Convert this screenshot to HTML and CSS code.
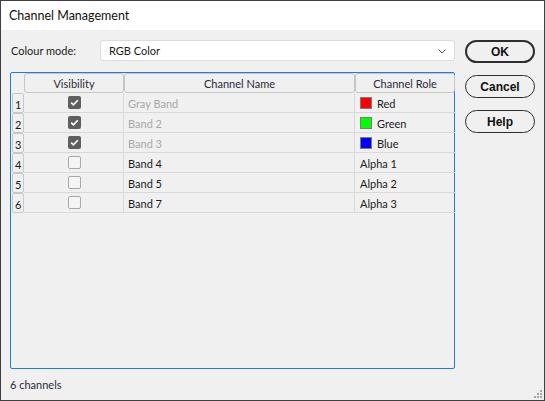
FILE: index.html
```html
<!DOCTYPE html>
<html>
<head>
<meta charset="utf-8">
<link rel="stylesheet" href="styles.css">
</head>
<body>
<div class="window">
  <div class="titlebar">Channel Management</div>
  <div class="content">
    <div class="main">
      <div class="mode-row">
        <span class="mode-label">Colour mode:</span>
        <div class="combo">
          <span>RGB Color</span>
          <svg class="chev" width="8" height="5" viewBox="0 0 8 5"><polyline points="0.5,0.5 4,4 7.5,0.5" fill="none" stroke="#555" stroke-width="1"/></svg>
        </div>
      </div>
      <div class="table">
        <div class="grid">
          <div class="corner"></div>
          <div class="hcell">Visibility</div>
          <div class="hcell">Channel Name</div>
          <div class="hcell">Channel Role</div>

          <div class="rn"><span>1</span></div>
          <div class="cell vis"><span class="cb checked"><svg width="13" height="13" viewBox="0 0 13 13"><polyline points="3.2,6.6 5.4,8.8 9.8,4.2" fill="none" stroke="#fff" stroke-width="1.6"/></svg></span></div>
          <div class="cell name dis">Gray Band</div>
          <div class="cell role"><span class="sw red"></span>Red</div>

          <div class="rn"><span>2</span></div>
          <div class="cell vis"><span class="cb checked"><svg width="13" height="13" viewBox="0 0 13 13"><polyline points="3.2,6.6 5.4,8.8 9.8,4.2" fill="none" stroke="#fff" stroke-width="1.6"/></svg></span></div>
          <div class="cell name dis">Band 2</div>
          <div class="cell role"><span class="sw green"></span>Green</div>

          <div class="rn"><span>3</span></div>
          <div class="cell vis"><span class="cb checked"><svg width="13" height="13" viewBox="0 0 13 13"><polyline points="3.2,6.6 5.4,8.8 9.8,4.2" fill="none" stroke="#fff" stroke-width="1.6"/></svg></span></div>
          <div class="cell name dis">Band 3</div>
          <div class="cell role"><span class="sw blue"></span>Blue</div>

          <div class="rn"><span>4</span></div>
          <div class="cell vis"><span class="cb"></span></div>
          <div class="cell name">Band 4</div>
          <div class="cell role">Alpha 1</div>

          <div class="rn"><span>5</span></div>
          <div class="cell vis"><span class="cb"></span></div>
          <div class="cell name">Band 5</div>
          <div class="cell role">Alpha 2</div>

          <div class="rn"><span>6</span></div>
          <div class="cell vis"><span class="cb"></span></div>
          <div class="cell name">Band 7</div>
          <div class="cell role">Alpha 3</div>
        </div>
      </div>
      <div class="footer">6 channels</div>
    </div>
    <div class="buttons">
      <div class="btn default">OK</div>
      <div class="btn">Cancel</div>
      <div class="btn">Help</div>
    </div>
  </div>
  <svg class="grip" width="9" height="9" viewBox="0 0 9 9">
    <rect x="7" y="1" width="2" height="2" fill="#a8a8a8"/>
    <rect x="4" y="4" width="2" height="2" fill="#a8a8a8"/>
    <rect x="7" y="4" width="2" height="2" fill="#a8a8a8"/>
    <rect x="1" y="7" width="2" height="2" fill="#a8a8a8"/>
    <rect x="4" y="7" width="2" height="2" fill="#a8a8a8"/>
    <rect x="7" y="7" width="2" height="2" fill="#a8a8a8"/>
  </svg>
</div>
</body>
</html>
```

FILE: styles.css
```css
* { box-sizing: border-box; }
html, body { margin: 0; padding: 0; }
body {
  font-family: "Lato", "Liberation Sans", sans-serif;
  font-size: 11px;
  color: #1b1b1b;
  background: #f0f0f0;
}
.window {
  position: relative;
  width: 545px;
  height: 401px;
  border: 1px solid #404040;
  display: flex;
  flex-direction: column;
  background: #f0f0f0;
}
.titlebar {
  height: 29px;
  line-height: 30px;
  background: #fff;
  padding-left: 8px;
  font-size: 12.5px;
  color: #111;
}
.content {
  flex: 1;
  display: flex;
  gap: 9px;
  padding: 0 9px;
}
.main {
  width: 446px;
  display: flex;
  flex-direction: column;
}
.mode-row {
  display: flex;
  align-items: center;
  margin-top: 10px;
  height: 21px;
}
.mode-label {
  width: 90px;
  padding-left: 1px;
}
.combo {
  flex: 1;
  height: 21px;
  margin-right: 1px;
  background: #fff;
  border: 1px solid #dcdcdc;
  border-radius: 3px;
  display: flex;
  align-items: center;
  justify-content: space-between;
  padding: 0 8px 0 8px;
}
.chev { margin-top: 1px; }
.table {
  margin-top: 11px;
  height: 297px;
  border: 1px solid #1a7fdc;
  border-radius: 2px;
  margin-right: 1px;
}
.grid {
  display: grid;
  grid-template-columns: 13px 100px 231px 100px;
  grid-auto-rows: 20px;
}
.hcell {
  border: 1px solid #c6c6c6;
  border-radius: 3px;
  display: flex;
  align-items: center;
  justify-content: center;
  color: #2a2a3a;
  padding-top: 1px;
}
.rn {
  padding-left: 1px;
}
.rn span {
  display: block;
  height: 20px;
  width: 12px;
  border: 1px solid #c8c8c8;
  border-radius: 2px;
  padding-left: 2px;
  padding-top: 4px;
  line-height: 14px;
  font-size: 11px;
}
.cell {
  border-bottom: 1px solid #d9d9d9;
  display: flex;
  align-items: center;
  padding-top: 1px;
}
.vis {
  border-right: 1px solid #d9d9d9;
  justify-content: center;
  padding-left: 1px;
  padding-top: 0;
}
.name {
  border-right: 1px solid #d9d9d9;
  padding-left: 4px;
}
.dis { color: #a8a8a8; }
.role { padding-left: 5px; }
.cb {
  width: 13px;
  height: 13px;
  border: 1px solid #a9a9a9;
  border-radius: 2px;
  background: #f5f5f5;
  display: block;
}
.cb.checked {
  border: none;
  background: #5f5f5f;
}
.cb svg { display: block; }
.sw {
  width: 12px;
  height: 12px;
  border: 1px solid #7c7c7c;
  margin-right: 5px;
  margin-top: -1px;
}
.red { background: #ff0000; }
.green { background: #00ff00; }
.blue { background: #0000ff; }
.footer {
  flex: 1;
  display: flex;
  align-items: center;
  color: #2a2a3a;
  padding-bottom: 1px;
}
.buttons {
  width: 70px;
  display: flex;
  flex-direction: column;
  gap: 12px;
  padding-top: 10px;
}
.btn {
  height: 23px;
  border: 1px solid #2e2e2e;
  border-radius: 12px;
  display: flex;
  align-items: center;
  justify-content: center;
  font-family: "Liberation Sans", sans-serif;
  font-weight: bold;
  font-size: 12px;
  color: #111;
}
.btn.default { border-width: 2px; }
.grip {
  position: absolute;
  right: 2px;
  bottom: 2px;
}
```
